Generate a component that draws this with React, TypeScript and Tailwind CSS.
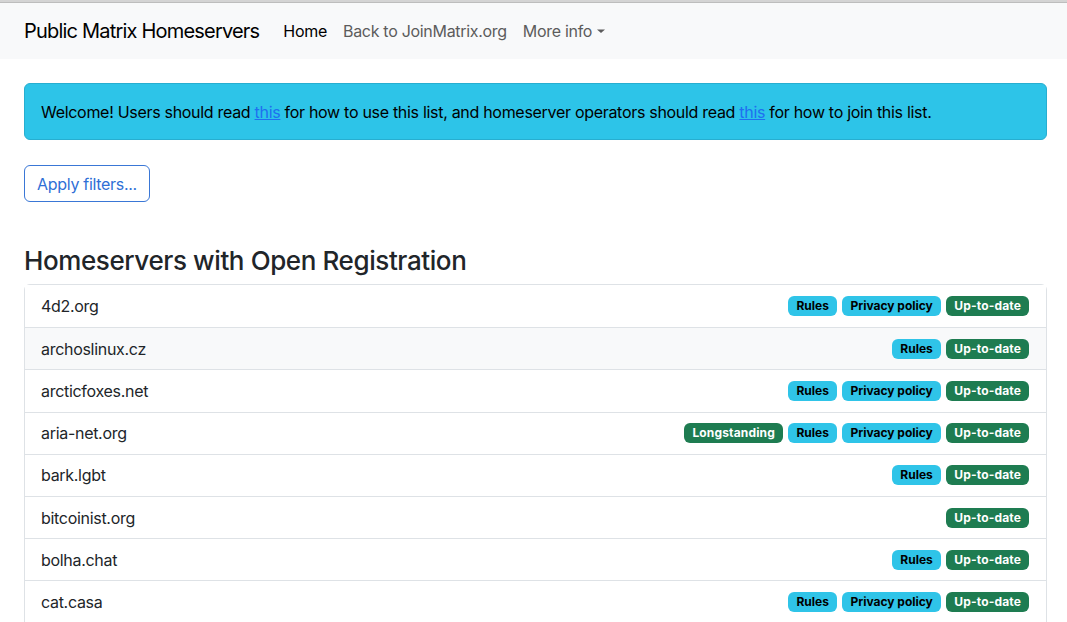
import React from 'react';

type Server = { name: string; tags: string[] };

const servers: Server[] = [
    { name: '4d2.org', tags: ['Rules', 'Privacy policy', 'Up-to-date'] },
    { name: 'archoslinux.cz', tags: ['Rules', 'Up-to-date'] },
    { name: 'arcticfoxes.net', tags: ['Rules', 'Privacy policy', 'Up-to-date'] },
    { name: 'aria-net.org', tags: ['Longstanding', 'Rules', 'Privacy policy', 'Up-to-date'] },
    { name: 'bark.lgbt', tags: ['Rules', 'Up-to-date'] },
    { name: 'bitcoinist.org', tags: ['Up-to-date'] },
    { name: 'bolha.chat', tags: ['Rules', 'Up-to-date'] },
    { name: 'cat.casa', tags: ['Rules', 'Privacy policy', 'Up-to-date'] },
];

const Badge = ({ label }: { label: string }) => {
    const green = label === 'Up-to-date' || label === 'Longstanding';
    return (
        <span
            className={
                green
                    ? 'rounded-[6px] bg-[#1e7c51] px-[8px] py-[3px] text-[12px] font-bold leading-[14px] tracking-[0.15px] text-white'
                    : 'rounded-[6px] bg-[#2fc4e8] px-[8px] py-[3px] text-[12px] font-bold leading-[14px] text-black'
            }
        >
            {label}
        </span>
    );
};

export default function App() {
    return (
        <div className="min-h-screen bg-white text-[#212529]" style={{ fontFamily: 'Inter, "Liberation Sans", sans-serif' }}>
            <div className="h-[3px] bg-[#d4d4d4] border-b border-[#bdbdbd]" />
            <nav className="flex h-[56px] items-center bg-[#f8f9fa] pl-6 pr-5">
                <span className="mr-[24px] text-[20px] tracking-[-0.8px] text-black">Public Matrix Homeservers</span>
                <div className="flex items-center gap-[16px] text-[16px] tracking-[-0.3px]">
                    <span className="text-black">Home</span>
                    <span className="text-[#5c5c5c]">Back to JoinMatrix.org</span>
                    <span className="flex items-center text-[#5c5c5c]">
                        More info
                        <svg width="10" height="6" viewBox="0 0 10 6" className="ml-[4px]">
                            <path d="M1 1.5 L5 5 L9 1.5 Z" fill="#5c5c5c" />
                        </svg>
                    </span>
                </div>
            </nav>

            <main className="pl-6 pr-5 pt-[24px]">
                <div className="flex h-[57px] items-center rounded-[6px] border border-[#27aed0] bg-[#2dc4e8] px-[16px] text-[16px] tracking-[-0.3px] text-black">
                    <p>
                        Welcome! Users should read <a className="text-[#1f6ff0] underline">this</a> for how to use this list, and homeserver operators should read{' '}
                        <a className="text-[#1f6ff0] underline">this</a> for how to join this list.
                    </p>
                </div>

                <button className="mt-[25px] h-[37px] rounded-[6px] border border-[#3a77d6] px-[12px] text-[16px] tracking-[-0.3px] text-[#2f6fd6]">
                    Apply filters...
                </button>

                <h3 className="mt-[43px] text-[26px] font-medium leading-[32px] tracking-[-0.4px] text-[#212529]">Homeservers with Open Registration</h3>

                <ul className="mt-[7px] rounded-t-[6px] border border-[#dee2e6]">
                    {servers.map((s, i) => (
                        <li
                            key={s.name}
                            className={
                                'flex h-[42.2px] items-center justify-between pl-[16px] pr-[17px] text-[16px] tracking-[-0.3px] ' +
                                (i > 0 ? 'border-t border-[#dee2e6] ' : '') +
                                (i === 1 ? 'bg-[#f8f9fa]' : 'bg-white')
                            }
                        >
                            <span>{s.name}</span>
                            <span className="flex items-center gap-[5.5px] tracking-normal">
                                {s.tags.map((t) => (
                                    <Badge key={t} label={t} />
                                ))}
                            </span>
                        </li>
                    ))}
                </ul>
            </main>
        </div>
    );
}
